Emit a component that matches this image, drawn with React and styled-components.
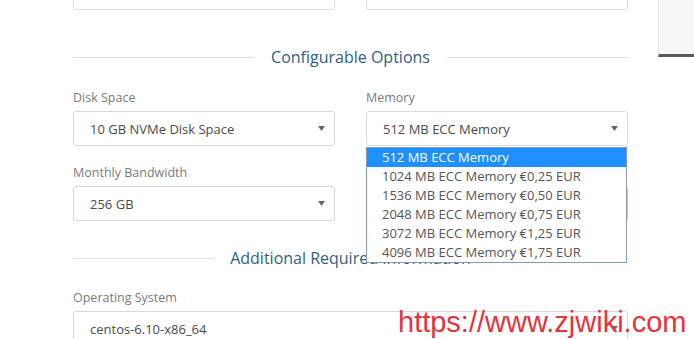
import React from "react";
import styled, { createGlobalStyle } from "styled-components";

const GlobalStyle = createGlobalStyle`
  html, body {
    margin: 0;
    padding: 0;
    background: #ffffff;
    overflow: hidden;
  }
  body {
    font-family: "Open Sans", "Liberation Sans", sans-serif;
  }
`;

const memoryOptions = [
  "512 MB ECC Memory",
  "1024 MB ECC Memory €0,25 EUR",
  "1536 MB ECC Memory €0,50 EUR",
  "2048 MB ECC Memory €0,75 EUR",
  "3072 MB ECC Memory €1,25 EUR",
  "4096 MB ECC Memory €1,75 EUR",
];

export default function App() {
  return (
    <>
      <GlobalStyle />
      <Page>
        <Main>
          <Row>
            <FormGroup>
              <TextInput />
            </FormGroup>
            <FormGroup>
              <TextInput />
            </FormGroup>
          </Row>

          <SectionTitle $top={19}>Configurable Options</SectionTitle>

          <Row>
            <FormGroup>
              <Label>Disk Space</Label>
              <Select>
                <span>10 GB NVMe Disk Space</span>
                <Arrow />
              </Select>
            </FormGroup>
            <FormGroup>
              <Label>Memory</Label>
              <Select>
                <span>512 MB ECC Memory</span>
                <Arrow />
              </Select>
              <OptionList>
                {memoryOptions.map((opt, i) => (
                  <Option key={opt} $active={i === 0}>
                    {opt}
                  </Option>
                ))}
              </OptionList>
            </FormGroup>
          </Row>

          <Row>
            <FormGroup>
              <Label>Monthly Bandwidth</Label>
              <Select>
                <span>256 GB</span>
                <Arrow />
              </Select>
            </FormGroup>
            {/* this one sits behind the open memory list; only its right edge shows */}
            <FormGroup>
              <Label>&nbsp;</Label>
              <Select $focus />
            </FormGroup>
          </Row>

          <SectionTitle $top={9}>Additional Required Information</SectionTitle>

          <FormGroup>
            <Label>Operating System</Label>
            <Select>
              <span>centos-6.10-x86_64</span>
              <Arrow />
            </Select>
          </FormGroup>
        </Main>
        <Summary />
      </Page>
      <Watermark>https://www.zjwiki.com</Watermark>
    </>
  );
}

function Arrow() {
  return (
    <ArrowIcon width="7" height="5" viewBox="0 0 7 5">
      <path d="M0 0 L7 0 L3.5 5 Z" fill="#666" />
    </ArrowIcon>
  );
}

const Page = styled.div`
  display: flex;
  align-items: flex-start;
  margin-top: -25px;
  width: 694px;
  overflow: hidden;
`;

const Main = styled.div`
  flex-shrink: 0;
  width: 555px;
  margin-left: 73px;
`;

const Summary = styled.aside`
  flex-shrink: 0;
  width: 300px;
  height: 82px;
  margin-left: 30px;
  box-sizing: border-box;
  background: #f6f6f6;
  border-left: 1px solid #e6e6e6;
  border-bottom: 3px solid #585858;
`;

const Row = styled.div`
  display: grid;
  grid-template-columns: 262px 262px;
  column-gap: 31px;
`;

const FormGroup = styled.div`
  position: relative;
  margin-bottom: 17px;
`;

const Label = styled.label`
  display: block;
  font-size: 12.5px;
  line-height: 18px;
  color: #7a7a7a;
  margin-top: 1px;
  margin-bottom: 4px;
`;

const TextInput = styled.div`
  height: 35px;
  box-sizing: border-box;
  border: 1px solid #dcdcdc;
  border-radius: 3px;
  background: #fff;
`;

const Select = styled.div`
  display: flex;
  align-items: center;
  justify-content: space-between;
  height: 35px;
  box-sizing: border-box;
  padding: 0 9px 0 16px;
  border: 1px solid ${(p) => (p.$focus ? "#b9cde6" : "#d9d9d9")};
  border-radius: 3px;
  background: #fff;
  font-size: 13px;
  color: #4a4a4a;
`;

const ArrowIcon = styled.svg`
  display: block;
  flex-shrink: 0;
`;

const OptionList = styled.ul`
  position: absolute;
  top: calc(100% + 1px);
  left: 0;
  width: 261px;
  margin: 0;
  padding: 0;
  list-style: none;
  box-sizing: border-box;
  background: #fff;
  border: 1px solid #7f9bb8;
  z-index: 5;
`;

const Option = styled.li`
  height: 19px;
  line-height: 19px;
  padding-left: 15px;
  font-size: 13px;
  background: ${(p) => (p.$active ? "#1e90ff" : "#fff")};
  color: ${(p) => (p.$active ? "#fff" : "#555")};
  white-space: nowrap;
`;

const SectionTitle = styled.h3`
  display: flex;
  align-items: center;
  gap: 17px;
  margin: ${(p) => p.$top}px 0 20px;
  height: 22px;
  font-size: 16px;
  font-weight: 400;
  line-height: 22px;
  color: #2f5f7e;
  white-space: nowrap;

  &::before,
  &::after {
    content: "";
    flex: 1;
    height: 1px;
    background: #dddddd;
  }
`;

const Watermark = styled.div`
  position: absolute;
  top: 308px;
  left: 398px;
  font-family: "Liberation Sans", Arial, sans-serif;
  font-size: 29px;
  line-height: 29px;
  color: #e6333b;
  white-space: nowrap;
  z-index: 10;
`;
